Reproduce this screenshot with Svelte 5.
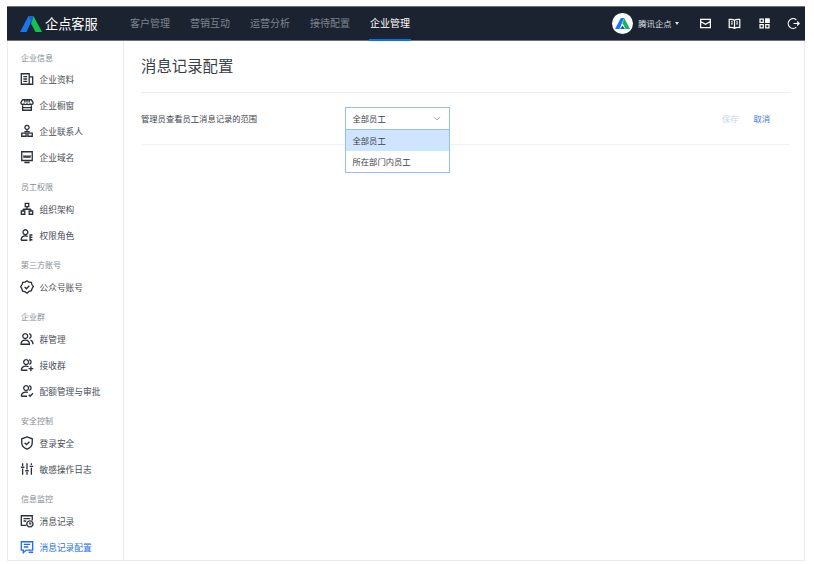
<script>
	const nav = ['客户管理', '营销互动', '运营分析', '接待配置', '企业管理'];

	// icon strokes are on a 16 unit grid
	const icons = {
		profile: 'M1.500 2h9v12h-9zM3.800 5.200h4.400M3.800 8h4.400M3.800 10.800h4.400M10.500 5.500h4V14h-4',
		store: 'M3 2h10l2 3.200a2 2 0 0 1-3.500 1.500 2.300 2.300 0 0 1-3.500 0 2.300 2.300 0 0 1-3.500 0A2 2 0 0 1 1 5.200zM3 8.500V14h10V8.500M3 11h10M5.500 2v3M8 2v3M10.500 2v3',
		contact: 'M8 1.500a2.400 2.400 0 1 0 .01 0M5 8.800h6M8 7v2M2 10.500h5v3.500H2zM9 10.500h5v3.500H9z',
		domain: 'M2 2h12v10H2zM5 14.300h6M4.500 6v2h7V6M6.800 6v2M9.200 6v2',
		org: 'M6 1.500h4v3.800H6zM8 5.300v3M3.500 8.300h9M3.500 8.300v2M12.500 8.300v2M1.500 10.300h4v3.700h-4zM10.500 10.300h4v3.700h-4z',
		role: 'M6.200 2a2.800 2.800 0 1 0 .01 0M1.300 14c0-3.200 2-5 4.900-5 1 0 1.900.2 2.600.7M1.300 14h7.200M11 8h3.200M11 10.700h3.200M11 13.400h3.200M11.500 7v8',
		official: 'M8 1l2.200 1.500 2.600.2.800 2.500 1.600 2.300-1.400 2.300-.7 2.500-2.600.6L8 15l-2.500-1.600-2.600-.6-.7-2.500L.8 7.500l1.600-2.300.8-2.500 2.600-.2zM5.300 8l2 2 3.400-3.500',
		groups: 'M6 1.800a2.800 2.800 0 1 0 .01 0M10.500 2a2.700 2.700 0 0 1 0 5.300M1.200 14c0-3.200 2-4.800 4.800-4.800s4.800 1.600 4.800 4.800zM12 9.200c1.700.6 2.800 2.200 2.800 4.800',
		receive: 'M7 1.800a2.800 2.800 0 1 0 .01 0M1.500 14c0-3.200 2.200-4.800 5.500-4.800 1 0 2 .2 2.800.7M1.500 14h7M10.500 2a2.700 2.700 0 0 1 0 5.300M12.500 9.500V15M9.800 12.200h5.400',
		quota: 'M7 1.800a2.800 2.800 0 1 0 .01 0M1.500 14c0-3.200 2.200-4.800 5.500-4.800.7 0 1.400.1 2 .3M1.500 14H8M10.500 2a2.700 2.700 0 0 1 0 5.300M10 12.300l1.600 1.700 3.200-3.500',
		shield: 'M8 1l6 2.200v4.500c0 3.400-2.500 6-6 7.300-3.500-1.300-6-3.900-6-7.300V3.200zM5.300 7.800l2.100 2.100 3.300-3.400',
		sliders: 'M3 1.500v3M3 7.500v7M1 6h4M8 1.500v7M8 11.500v3M6 10h4M13 1.500v2M13 6.500v8M11 5h4',
		records: 'M7 13H1.500V2H14v5.500M4 5.200h7.500M4 8h3M11.300 7.800a3.500 3.500 0 1 0 .01 0M11.300 9.300v2h1.700',
		config: 'M1.500 2h13v9.500H7L3.800 14.500v-3H1.500zM4.300 5h7.400M4.300 8h5.200M10 14h5'
	};

	const groups = [
		{ title: '企业信息', items: [['profile', '企业资料'], ['store', '企业橱窗'], ['contact', '企业联系人'], ['domain', '企业域名']] },
		{ title: '员工权限', items: [['org', '组织架构'], ['role', '权限角色']] },
		{ title: '第三方账号', items: [['official', '公众号账号']] },
		{ title: '企业群', items: [['groups', '群管理'], ['receive', '接收群'], ['quota', '配额管理与审批']] },
		{ title: '安全控制', items: [['shield', '登录安全'], ['sliders', '敏感操作日志']] },
		{ title: '信息监控', items: [['records', '消息记录'], ['config', '消息记录配置', true]] }
	];
</script>

<div class="page">
	<div class="frame">
		<header class="topbar">
			<div class="brand">
				<svg class="logo" viewBox="0 0 22 16" width="22" height="16">
					<path d="M0 16 8.500 0h5L6.500 16z" fill="#1479ee" />
					<path d="M13.500 0 22 16h-6.500L11 7.500z" fill="#12c24f" />
					<path d="M11 7.500 13.500 0h-5l2.500 5z" fill="#1b5fd0" />
				</svg>
				<span>企点客服</span>
			</div>
			<nav class="nav">
				{#each nav as item, i}
					<span class="nav-item" class:active={i === 4}>{item}</span>
				{/each}
			</nav>
			<div class="account">
				<span class="avatar">
					<svg viewBox="0 0 22 16" width="15" height="11">
						<path d="M0 16 8.500 0h5L6.500 16z" fill="#1479ee" />
						<path d="M13.500 0 22 16h-6.500L11 7.500z" fill="#12b85a" />
						<path d="M7.500 16l3.500-5 3.500 5z" fill="#1b4fb0" />
					</svg>
				</span>
				<span class="account-name">腾讯企点</span>
				<span class="caret"></span>
			</div>
			<div class="tools">
				<svg viewBox="0 0 16 16" width="13" height="13"><path d="M2 3h12v10H2zM2 5.500l6 3.500 6-3.500" /></svg>
				<svg viewBox="0 0 16 16" width="13" height="13"><path d="M8 4C6.500 3 4 2.700 1.500 3v10c2.500-.3 5 0 6.500 1 1.500-1 4-1.300 6.500-1V3C12 2.700 9.500 3 8 4zM8 4v10M3.800 6h2M3.800 8.500h2M10.200 6h2M10.200 8.500h2" /></svg>
				<svg viewBox="0 0 16 16" width="13" height="13"><path d="M2.500 2.500h4v4h-4zM9.500 2.500h4v4h-4zM2.500 9.500h4v4h-4zM9.500 9.500h4v4h-4z" /><path class="solid" d="M9.500 2.500h4v4h-4z" /></svg>
				<svg viewBox="0 0 16 16" width="13" height="13"><path d="M11.500 3.500a6 6 0 1 0 0 9M8 8h7M12.500 5.500 15 8l-2.500 2.500" /></svg>
			</div>
		</header>

		<div class="body">
			<aside class="sidebar">
				{#each groups as group}
					<section class="group">
						<h4>{group.title}</h4>
						{#each group.items as [icon, label, current]}
							<div class="side-item" class:current>
								<svg viewBox="0 0 16 16" width="14" height="14"><path d={icons[icon]} /></svg>
								<span>{label}</span>
							</div>
						{/each}
					</section>
				{/each}
			</aside>

			<main class="content">
				<h1>消息记录配置</h1>
				<div class="row">
					<span class="row-label">管理员查看员工消息记录的范围</span>
					<div class="select">
						<div class="select-value">
							<span>全部员工</span>
							<svg viewBox="0 0 10 6" width="8" height="5"><path d="M1 1l4 4 4-4" /></svg>
						</div>
						<ul class="select-menu">
							<li class="selected">全部员工</li>
							<li>所在部门内员工</li>
						</ul>
					</div>
					<div class="actions">
						<span class="save">保存</span>
						<span class="cancel">取消</span>
					</div>
				</div>
			</main>
		</div>
	</div>
</div>

<style>
	:global(body) {
		margin: 0;
		background: #fff;
	}

	.page {
		width: 814px;
		height: 564px;
		padding: 6px 9px 3px 7px;
		box-sizing: border-box;
		font-family: "Noto Sans CJK SC", "Liberation Sans", sans-serif;
		color: #3b4048;
	}

	.frame {
		display: flex;
		flex-direction: column;
		height: 100%;
		border: 1px solid #e9ebee;
		border-top: 0;
		box-sizing: border-box;
	}

	.topbar {
		display: flex;
		align-items: center;
		flex: none;
		height: 35px;
		margin: 0 -1px;
		box-sizing: border-box;
		border-top: 1px solid #6c7077;
		border-bottom: 1px solid #6c7077;
		background: #1c2330;
	}

	.brand {
		display: flex;
		align-items: center;
		gap: 3px;
		width: 123px;
		padding-left: 13px;
		box-sizing: border-box;
		font-size: 13.200px;
		line-height: 1;
		color: #fff;
	}

	.logo {
		flex: none;
	}

	.nav {
		display: flex;
		align-self: stretch;
		gap: 20px;
	}

	.nav-item {
		display: flex;
		align-items: center;
		width: 40px;
		padding-bottom: 2px;
		box-sizing: content-box;
		font-size: 10px;
		color: #7d8591;
		white-space: nowrap;
		position: relative;
	}

	.nav-item.active {
		color: #fff;
	}

	.nav-item.active::after {
		content: '';
		position: absolute;
		left: -1px;
		right: -1px;
		bottom: -1px;
		height: 2px;
		background: #0d6ff0;
	}

	.account {
		display: flex;
		align-items: center;
		margin-left: auto;
		gap: 5px;
	}

	.avatar {
		display: flex;
		align-items: center;
		justify-content: center;
		width: 21px;
		height: 21px;
		border-radius: 50%;
		background: #fff;
	}

	.account-name {
		padding-bottom: 1px;
		font-size: 8.300px;
		color: #dfe2e6;
	}

	.caret {
		width: 0;
		height: 0;
		margin-left: -2px;
		border: 2.500px solid transparent;
		border-top: 3px solid #dfe2e6;
		border-bottom: 0;
	}

	.tools {
		display: flex;
		align-items: center;
		gap: 16.500px;
		margin-left: 20px;
		padding-right: 5px;
	}

	.tools svg {
		fill: none;
		stroke: #fff;
		stroke-width: 1.500;
	}

	.tools .solid {
		fill: #fff;
	}

	.body {
		display: flex;
		flex: 1;
		min-height: 0;
	}

	.sidebar {
		flex: none;
		width: 116px;
		padding-top: 9px;
		box-sizing: border-box;
		border-right: 1px solid #e9ebee;
		overflow: hidden;
	}

	.group {
		margin-bottom: 9px;
	}

	.group h4 {
		height: 17px;
		margin: 0;
		padding-left: 13px;
		font-size: 8px;
		font-weight: 400;
		line-height: 16px;
		color: #858b94;
	}

	.group:first-child h4 {
		height: 16px;
	}

	.side-item {
		display: flex;
		align-items: center;
		gap: 5.500px;
		height: 26px;
		padding-left: 12px;
		font-size: 8.700px;
		color: #4a4f57;
	}

	.side-item svg {
		flex: none;
		fill: none;
		stroke: #2b2f36;
		stroke-width: 1.500;
	}

	.side-item.current {
		color: #1f6fe5;
	}

	.side-item.current svg {
		stroke: #1f6fe5;
	}

	.content {
		flex: 1;
		min-width: 0;
		padding: 0 14px 0 17px;
	}

	h1 {
		height: 51px;
		margin: 0;
		border-bottom: 1px solid #eceef0;
		font-size: 15.400px;
		font-weight: 400;
		line-height: 48px;
		color: #3a3f47;
	}

	.row {
		display: flex;
		align-items: center;
		height: 52px;
		box-sizing: border-box;
		border-bottom: 1px solid #f0f1f3;
		font-size: 8.300px;
		line-height: 12px;
	}

	.row-label {
		width: 203.500px;
		flex: none;
		margin-bottom: 2px;
		color: #41464e;
	}

	.select {
		position: relative;
		width: 105.500px;
		flex: none;
	}

	.select-value {
		display: flex;
		align-items: center;
		justify-content: space-between;
		height: 23px;
		padding: 0 8px 1px 7px;
		box-sizing: border-box;
		border: 1px solid #94bef8;
		background: #fff;
	}

	.select-value svg {
		fill: none;
		stroke: #a6abb3;
		stroke-width: 1.200;
	}

	.select-menu {
		position: absolute;
		top: 23px;
		left: 0;
		right: 0;
		margin: 0;
		padding: 0;
		list-style: none;
		box-sizing: border-box;
		border: 1px solid #94bef8;
		border-top: 0;
		background: #fff;
	}

	.select-menu li {
		height: 21px;
		padding-left: 7px;
		line-height: 20px;
	}

	.select-menu .selected {
		background: #cfe5fd;
	}

	.actions {
		display: flex;
		gap: 15px;
		margin-left: auto;
		margin-bottom: 2px;
		padding-right: 20px;
	}

	.save {
		color: #c5d6f8;
	}

	.cancel {
		color: #3a78e8;
	}
</style>
